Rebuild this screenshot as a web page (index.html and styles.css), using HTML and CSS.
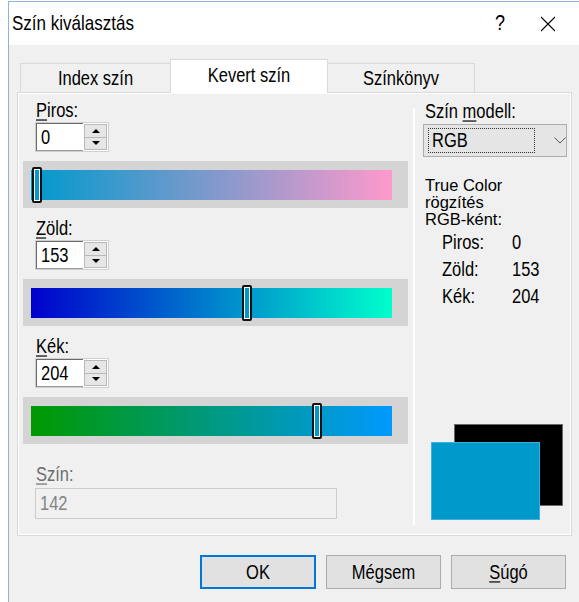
FILE: index.html
```html
<!DOCTYPE html>
<html lang="hu">
<head>
<meta charset="utf-8">
<title>Szín kiválasztás</title>
<link rel="stylesheet" href="styles.css">
</head>
<body>
<div class="window">
  <header class="titlebar">
    <span class="title">Szín kiválasztás</span>
    <span class="caption-btn help">?</span>
    <span class="caption-btn close">
      <svg width="16" height="16" viewBox="0 0 16 16"><path d="M1 1 L15 15 M15 1 L1 15" stroke="#000" stroke-width="1.1" fill="none"/></svg>
    </span>
  </header>

  <div class="client">
    <div class="tabs">
      <div class="tab tab-index"><span class="tx">Index szín</span></div>
      <div class="tab tab-mix active"><span class="tx">Kevert szín</span></div>
      <div class="tab tab-book"><span class="tx">Színkönyv</span></div>
    </div>

    <div class="page">
      <div class="mixer">
        <section class="channel">
          <div class="label"><u>P</u>iros:</div>
          <div class="spin">
            <span class="edit"><span class="tx">0</span></span>
            <span class="arrows"><span class="arrow up"></span><span class="arrow down"></span></span>
          </div>
          <div class="band">
            <div class="track track-red"><span class="thumb" style="left: calc(1px + (100% - 11px) * 0)"></span></div>
          </div>
        </section>

        <section class="channel">
          <div class="label"><u>Z</u>öld:</div>
          <div class="spin">
            <span class="edit"><span class="tx">153</span></span>
            <span class="arrows"><span class="arrow up"></span><span class="arrow down"></span></span>
          </div>
          <div class="band">
            <div class="track track-green"><span class="thumb" style="left: calc(1px + (100% - 11px) * 0.6)"></span></div>
          </div>
        </section>

        <section class="channel">
          <div class="label"><u>K</u>ék:</div>
          <div class="spin">
            <span class="edit"><span class="tx">204</span></span>
            <span class="arrows"><span class="arrow up"></span><span class="arrow down"></span></span>
          </div>
          <div class="band">
            <div class="track track-blue"><span class="thumb" style="left: calc(1px + (100% - 11px) * 0.8)"></span></div>
          </div>
        </section>

        <div class="label label-disabled index-label"><u>S</u>zín:</div>
        <div class="field"><span class="tx">142</span></div>
      </div>

      <div class="sep"></div>

      <div class="model">
        <div class="label model-label">Szín <u>m</u>odell:</div>
        <div class="combo">
          <span class="combo-value"><span class="tx">RGB</span></span>
          <svg class="chevron" width="12" height="7" viewBox="0 0 12 7"><path d="M0.5 0.5 L6 6 L11.5 0.5" stroke="#555" stroke-width="1" fill="none"/></svg>
        </div>
        <div class="info">
          <div>True Color</div>
          <div>rögzítés</div>
          <div>RGB-ként:</div>
        </div>
        <div class="rows">
          <div class="row"><span class="row-name">Piros:</span><span>0</span></div>
          <div class="row"><span class="row-name">Zöld:</span><span>153</span></div>
          <div class="row"><span class="row-name">Kék:</span><span>204</span></div>
        </div>
        <div class="preview">
          <span class="swatch swatch-old"></span>
          <span class="swatch swatch-new"></span>
        </div>
      </div>
    </div>

    <div class="buttons">
      <button class="btn default"><span class="tx">OK</span></button>
      <button class="btn"><span class="tx">Mégsem</span></button>
      <button class="btn"><span class="tx"><u>S</u>úgó</span></button>
    </div>
  </div>
</div>
</body>
</html>
```

FILE: styles.css
```css
* {
  box-sizing: border-box;
}

html,
body {
  margin: 0;
  background: #fff;
}

body {
  width: 579px;
  height: 602px;
  overflow: hidden;
  font-family: "Liberation Sans", Arial, sans-serif;
  font-size: 16.5px;
  color: #000;
}

u {
  text-decoration-thickness: 1px;
  text-underline-offset: 2px;
}

/* the dialog font is drawn tall and narrow: stretch glyphs vertically */
.tx,
.title,
.help,
.label,
.row {
  transform: scaleY(1.18);
}

.tx {
  display: inline-block;
}

/* window frame */
.window {
  margin: 1px 0 0 8px;
  height: 601px;
  border-top: 1px solid #8fb2de;
  border-left: 1px solid #8fb2de;
  background: #f0f0f0;
}

.titlebar {
  display: flex;
  align-items: center;
  height: 43px;
  padding: 0 7px 0 3px;
  background: #fff;
  font-size: 17px;
}

.title {
  flex: 1;
}

.caption-btn {
  display: flex;
  align-items: center;
  justify-content: center;
  width: 48px;
  height: 100%;
}

.help {
  font-size: 18px;
}

/* dialog body */
.client {
  padding: 0 7px 0 8px;
}

.tabs {
  display: flex;
  align-items: flex-end;
  height: 47px;
  padding: 14px 0 0 3px;
}

.tab {
  height: 29px;
  border: 1px solid #d9d9d9;
  border-bottom: none;
  background: #f0f0f0;
  text-align: center;
  line-height: 29px;
}

.tab-index {
  width: 151px;
}

.tab-mix {
  width: 158px;
  margin-left: -1px;
}

.tab-book {
  width: 148px;
  margin-left: -1px;
}

.tab.active {
  position: relative;
  z-index: 1;
  height: 34px;
  margin-bottom: -1px;
  background: #fff;
  line-height: 30px;
}

.page {
  display: flex;
  height: 444px;
  padding: 7px 4px 0 5px;
  border: 1px solid #d9d9d9;
  box-shadow: inset 1px 1px 0 #fff, inset -1px -1px 0 #fff;
}

/* left column: the three channel mixers */
.mixer {
  width: 385px;
}

.label {
  height: 20px;
  line-height: 20px;
  padding-left: 13px;
  white-space: nowrap;
}

.label-disabled {
  color: #6d6d6d;
}

.channel {
  height: 118px;
}

.spin {
  display: flex;
  width: 74px;
  height: 30px;
  margin: 2px 0 9px 12px;
  border: 1px solid #cfcfcf;
}

.edit {
  width: 47px;
  height: 100%;
  padding-left: 4px;
  border-top: 1px solid #6a6a6a;
  border-left: 1px solid #6a6a6a;
  border-bottom: 1px solid #9a9a9a;
  background: #fff;
  line-height: 27px;
}

.arrows {
  display: flex;
  flex-direction: column;
  flex: 1;
  padding: 1px;
  background: #fff;
}

.arrow {
  position: relative;
  flex: 1;
  border: 1px solid #b9b9b9;
  background: #e6e6e6;
}

.arrow + .arrow {
  margin-top: -1px;
}

.arrow::after {
  content: "";
  position: absolute;
  left: 50%;
  top: 50%;
  margin: -2px 0 0 -4px;
  border-left: 4px solid transparent;
  border-right: 4px solid transparent;
}

.arrow.up::after {
  border-bottom: 4px solid #000;
}

.arrow.down::after {
  border-top: 4px solid #000;
}

.band {
  height: 47px;
  padding: 9px 16px 8px 8px;
  background: #d4d4d4;
}

.track {
  position: relative;
  height: 30px;
}

.track-red {
  background: linear-gradient(to right, rgb(0, 153, 204), rgb(255, 153, 204));
}

.track-green {
  background: linear-gradient(to right, rgb(0, 0, 204), rgb(0, 255, 204));
}

.track-blue {
  background: linear-gradient(to right, rgb(0, 153, 0), rgb(0, 153, 255));
}

.thumb {
  position: absolute;
  top: -3px;
  bottom: -3px;
  width: 10px;
  border: 2px solid #111;
  border-radius: 2px;
  box-shadow: inset 0 0 0 1px #fff;
}

.index-label {
  margin-top: 10px;
}

.field {
  width: 302px;
  height: 31px;
  margin: 4px 0 0 12px;
  padding-left: 4px;
  border: 1px solid #cccccc;
  color: #838383;
  line-height: 29px;
}

.sep {
  width: 2px;
  margin: 8px 0 10px 5px;
  background: #fff;
}

/* right column: colour model */
.model {
  display: flex;
  flex-direction: column;
  width: 144px;
  margin-left: 8px;
}

.model-label {
  margin-top: 1px;
  padding-left: 2px;
}

.combo {
  display: flex;
  align-items: center;
  height: 33px;
  margin-top: 3px;
  padding: 3px 0 3px 4px;
  border: 1px solid #adadad;
  background: #e5e5e5;
}

.combo-value {
  width: 107px;
  height: 100%;
  padding-left: 3px;
  border: 1px dotted #333;
  line-height: 23px;
}

.chevron {
  margin-left: 19px;
}

.info {
  margin-top: 20px;
  padding-left: 2px;
  line-height: 17px;
}

.rows {
  margin-top: 1px;
}

.row {
  display: flex;
  height: 27px;
  line-height: 27px;
  padding-left: 19px;
}

.row-name {
  width: 70px;
}

.preview {
  position: relative;
  height: 96px;
  margin-top: auto;
  margin-bottom: 15px;
}

.swatch {
  position: absolute;
}

.swatch-old {
  left: 31px;
  top: 0;
  width: 109px;
  height: 82px;
  background: #000;
  border: 1px solid #6a6a6a;
}

.swatch-new {
  left: 8px;
  top: 18px;
  width: 109px;
  height: 78px;
  background: rgb(0, 153, 204);
  border: 1px solid #3fb0db;
}

/* dialog buttons */
.buttons {
  display: flex;
  justify-content: flex-end;
  gap: 10px;
  margin-top: 19px;
  padding-right: 6px;
}

.btn {
  width: 115px;
  height: 34px;
  padding: 0;
  border: 1px solid #adadad;
  background: #e1e1e1;
  font: inherit;
  color: #000;
}

.btn.default {
  width: 116px;
  border: 2px solid #0078d7;
}
```
